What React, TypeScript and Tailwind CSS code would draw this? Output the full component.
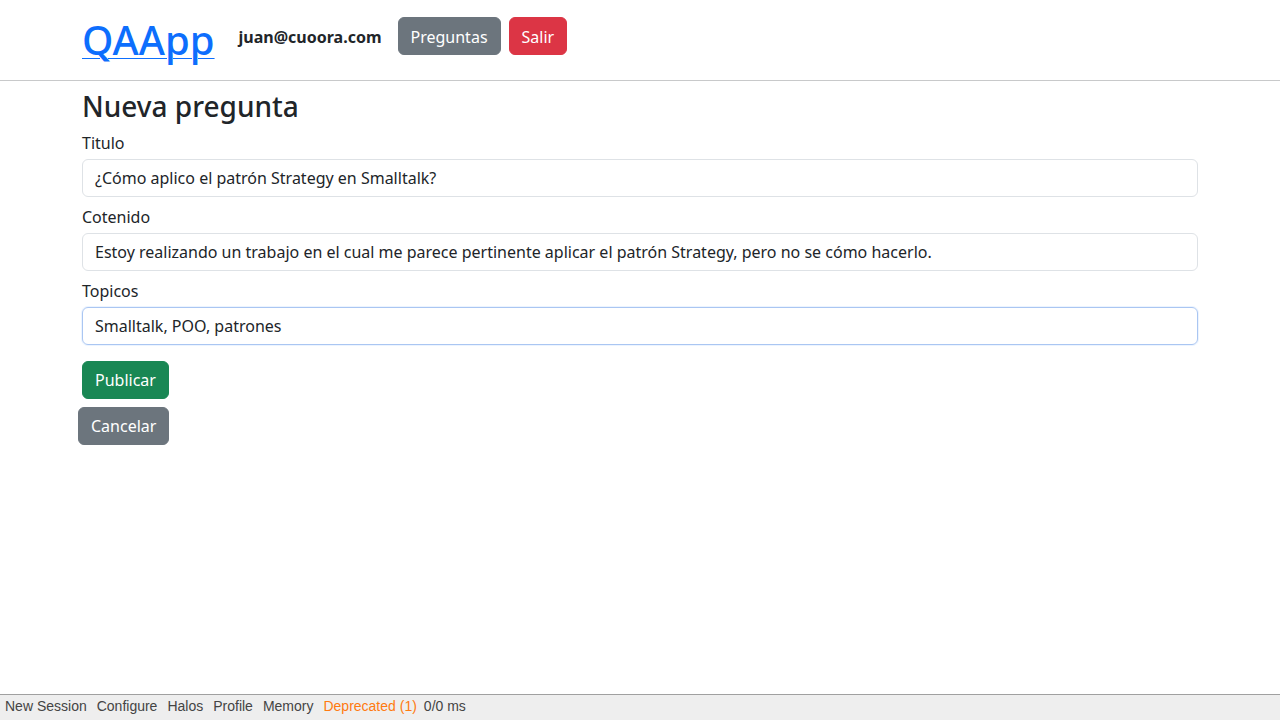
import React from "react";

const noto = { fontFamily: '"Noto Sans", "Liberation Sans", sans-serif' };

export default function App() {
  return (
    <div className="min-h-[720px] flex flex-col bg-white text-[#212529]" style={noto}>
      <div className="flex-1">
        <div className="border-b border-[#c8c9ca] h-[81px]">
          <div className="w-[1116px] mx-auto flex items-start">
            <a href="#" className="mt-4 text-[40px] leading-[48px] font-medium text-[#0d6efd] underline decoration-1 underline-offset-[3px]">QAApp</a>
            <span className="ml-6 mt-[25px] text-[16px] leading-6 font-bold">juan@cuoora.com</span>
            <button className="ml-4 mt-[17px] h-[38px] px-3 pt-[2px] rounded-md border border-[#6c757d] bg-[#6c757d] text-white text-[16px] leading-6">Preguntas</button>
            <button className="ml-2 mt-[17px] h-[38px] px-3 pt-[2px] rounded-md border border-[#dc3545] bg-[#dc3545] text-white text-[16px] leading-6">Salir</button>
          </div>
        </div>
        <div className="w-[1116px] mx-auto">
          <h3 className="mt-[8px] text-[28px] leading-[34px] font-medium">Nueva pregunta</h3>
          <label className="block mt-[8px] text-[16px] leading-6">Titulo</label>
          <div className="mt-1 h-[38px] border border-[#dee2e6] rounded-md px-3 flex items-center text-[16px]">¿Cómo aplico el patrón Strategy en Smalltalk?</div>
          <label className="block mt-2 text-[16px] leading-6">Cotenido</label>
          <div className="mt-1 h-[38px] border border-[#dee2e6] rounded-md px-3 flex items-center text-[16px]">Estoy realizando un trabajo en el cual me parece pertinente aplicar el patrón Strategy, pero no se cómo hacerlo.</div>
          <label className="block mt-2 text-[16px] leading-6">Topicos</label>
          <div className="mt-1 h-[38px] border border-[#aac6f2] rounded-md px-3 flex items-center text-[16px] shadow-[0_0_0_1px_rgba(13,110,253,0.08)]">Smalltalk, POO, patrones</div>
          <div className="mt-4">
            <button className="h-[38px] px-3 rounded-md border border-[#198754] bg-[#198754] text-white text-[16px] leading-6">Publicar</button>
          </div>
          <div className="mt-2 -ml-1">
            <button className="h-[38px] px-3 rounded-md border border-[#6c757d] bg-[#6c757d] text-white text-[16px] leading-6">Cancelar</button>
          </div>
        </div>
      </div>
      <div className="h-[26px] border-t border-[#a0a0a0] bg-[#eeeeee] flex items-center pl-[5px] pb-[2px] gap-[10px] text-[14px] text-[#444444]" style={{ fontFamily: '"Liberation Sans", Arial, sans-serif' }}>
        <span>New Session</span>
        <span>Configure</span>
        <span>Halos</span>
        <span>Profile</span>
        <span>Memory</span>
        <span className="text-[#ff7a10]">Deprecated (1)</span>
        <span className="-ml-[3px]">0/0 ms</span>
      </div>
    </div>
  );
}
